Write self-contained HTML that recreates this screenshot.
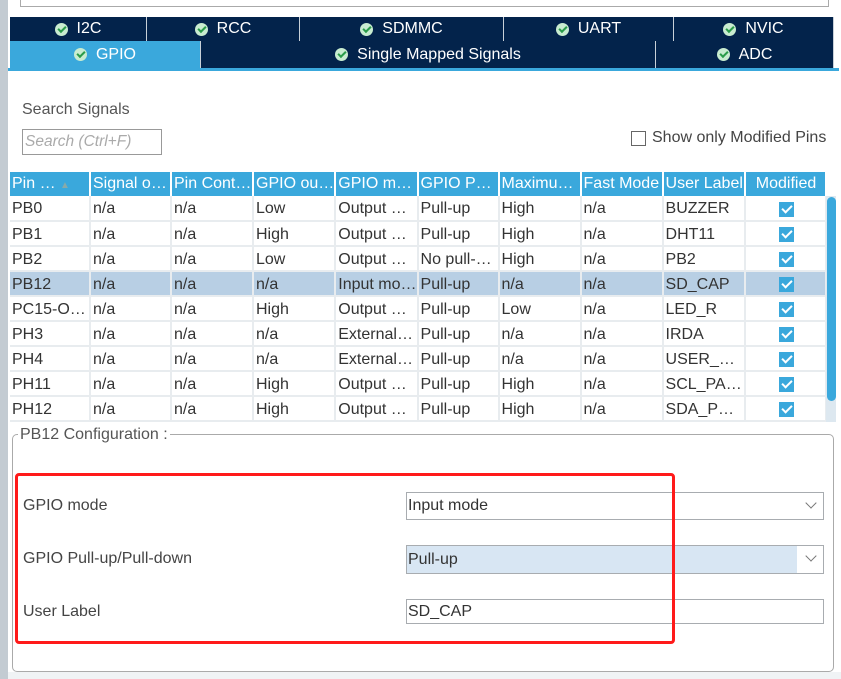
<!DOCTYPE html>
<html><head><style>
*{box-sizing:border-box;margin:0;padding:0}
body{width:841px;height:679px;overflow:hidden;background:#fff;font-family:"Liberation Sans",sans-serif;position:relative;color:#333}
.a{position:absolute}
.tab{position:absolute;background:#03234b;color:#fff;font-size:16px;display:flex;align-items:center;justify-content:center;border-right:1px solid #c8d0d8}
.ck{display:inline-block;width:13px;height:13px;border-radius:50%;background:#c8ecd0;margin-right:9px;position:relative}
.ck:after{content:"";position:absolute;left:3px;top:3px;width:6px;height:3px;border-left:2px solid #2a9c4a;border-bottom:2px solid #2a9c4a;transform:rotate(-45deg)}
table{border-collapse:collapse;position:absolute;left:10px;top:172px;table-layout:fixed;font-size:16px}
th{background:#3aa8dc;color:#fff;font-weight:normal;height:24px;text-align:left;padding-left:2px;border-right:2px solid #fff;white-space:nowrap;overflow:hidden}
td{height:25px;padding-left:2px;padding-top:2px;border-right:2px solid #e8ecef;border-bottom:2px solid #e8ecef;white-space:nowrap;overflow:hidden;color:#333}
tr.sel td{background:#b8cfe4}
.cb{display:block;margin:0 auto;width:15px;height:15px;background:#3aa8dc;position:relative}
.cb:after{content:"";position:absolute;left:3px;top:3px;width:8px;height:4px;border-left:2px solid #fff;border-bottom:2px solid #fff;transform:rotate(-45deg)}
.lbl{position:absolute;left:23px;font-size:16px;color:#444}
.fld{position:absolute;left:406px;width:418px;border:1px solid #a8acb0;font-size:16px;padding-left:1px;display:flex;align-items:center;color:#333}
.chev{position:absolute;right:8px;top:6px;width:8px;height:8px;border-right:1.3px solid #777;border-bottom:1.3px solid #777;transform:rotate(45deg)}
</style></head><body>
<div class="a" style="left:0;top:0;width:8px;height:679px;background:#c3cbd2"></div>
<div class="a" style="left:20px;top:-2px;width:809px;height:9px;border:1px solid #aaa;border-top:none"></div>
<div class="tab" style="left:10px;top:17px;width:137px;height:24px"><span class="ck"></span>I2C</div>
<div class="tab" style="left:147px;top:17px;width:153px;height:24px"><span class="ck"></span>RCC</div>
<div class="tab" style="left:300px;top:17px;width:204px;height:24px"><span class="ck"></span>SDMMC</div>
<div class="tab" style="left:504px;top:17px;width:170px;height:24px"><span class="ck"></span>UART</div>
<div class="tab" style="left:674px;top:17px;width:160px;height:24px"><span class="ck"></span>NVIC</div>
<div class="tab" style="left:10px;top:41px;width:191px;height:27px;background:#3aa8dc"><span class="ck"></span>GPIO</div>
<div class="tab" style="left:201px;top:41px;width:455px;height:27px"><span class="ck"></span>Single Mapped Signals</div>
<div class="tab" style="left:656px;top:41px;width:178px;height:27px"><span class="ck"></span>ADC</div>
<div class="a" style="left:8px;top:68px;width:831px;height:3px;background:#3aa8dc"></div>
<div class="a" style="left:22px;top:101px;font-size:16px;color:#555">Search Signals</div>
<div class="a" style="left:22px;top:129px;width:140px;height:26px;border:1px solid #999;font-size:15.5px;font-style:italic;color:#aaa;padding:3px 2px">Search (Ctrl+F)</div>
<div class="a" style="left:631px;top:131px;width:15px;height:15px;border:1px solid #666"></div>
<div class="a" style="left:652px;top:129px;font-size:16px;color:#444">Show only Modified Pins</div>
<table>
<colgroup><col style="width:80px"><col style="width:81px"><col style="width:82px"><col style="width:82px"><col style="width:82px"><col style="width:81px"><col style="width:82px"><col style="width:82px"><col style="width:82px"><col style="width:81px"></colgroup>
<tr><th>Pin … <span style="color:#8aa;font-size:10px">▲</span></th><th>Signal o…</th><th>Pin Cont…</th><th>GPIO ou…</th><th>GPIO m…</th><th>GPIO P…</th><th>Maximu…</th><th>Fast Mode</th><th>User Label</th><th style="text-align:center">Modified</th></tr>
<tr><td>PB0</td><td>n/a</td><td>n/a</td><td>Low</td><td>Output …</td><td>Pull-up</td><td>High</td><td>n/a</td><td>BUZZER</td><td><span class="cb"></span></td></tr>
<tr><td>PB1</td><td>n/a</td><td>n/a</td><td>High</td><td>Output …</td><td>Pull-up</td><td>High</td><td>n/a</td><td>DHT11</td><td><span class="cb"></span></td></tr>
<tr><td>PB2</td><td>n/a</td><td>n/a</td><td>Low</td><td>Output …</td><td>No pull-…</td><td>High</td><td>n/a</td><td>PB2</td><td><span class="cb"></span></td></tr>
<tr class="sel"><td>PB12</td><td>n/a</td><td>n/a</td><td>n/a</td><td>Input mo…</td><td>Pull-up</td><td>n/a</td><td>n/a</td><td>SD_CAP</td><td><span class="cb"></span></td></tr>
<tr><td>PC15-O…</td><td>n/a</td><td>n/a</td><td>High</td><td>Output …</td><td>Pull-up</td><td>Low</td><td>n/a</td><td>LED_R</td><td><span class="cb"></span></td></tr>
<tr><td>PH3</td><td>n/a</td><td>n/a</td><td>n/a</td><td>External…</td><td>Pull-up</td><td>n/a</td><td>n/a</td><td>IRDA</td><td><span class="cb"></span></td></tr>
<tr><td>PH4</td><td>n/a</td><td>n/a</td><td>n/a</td><td>External…</td><td>Pull-up</td><td>n/a</td><td>n/a</td><td>USER_…</td><td><span class="cb"></span></td></tr>
<tr><td>PH11</td><td>n/a</td><td>n/a</td><td>High</td><td>Output …</td><td>Pull-up</td><td>High</td><td>n/a</td><td>SCL_PA…</td><td><span class="cb"></span></td></tr>
<tr><td>PH12</td><td>n/a</td><td>n/a</td><td>High</td><td>Output …</td><td>Pull-up</td><td>High</td><td>n/a</td><td>SDA_P…</td><td><span class="cb"></span></td></tr>
</table>
<div class="a" style="left:826px;top:196px;width:10px;height:226px;background:#dde8f0"></div>
<div class="a" style="left:827px;top:197px;width:9px;height:204px;background:#3aa8dc;border-radius:5px"></div>
<div class="a" style="left:8px;top:672px;width:833px;height:7px;background:#f0f3f5"></div>
<div class="a" style="left:12px;top:434px;width:822px;height:238px;border:1px solid #aaa;border-radius:5px;background:#fff"></div>
<div class="a" style="left:18px;top:426px;font-size:16px;color:#555;background:#fff;padding:0 2px">PB12 Configuration :</div>
<div class="lbl" style="top:497px">GPIO mode</div>
<div class="lbl" style="top:550px">GPIO Pull-up/Pull-down</div>
<div class="lbl" style="top:603px">User Label</div>
<div class="fld" style="top:492px;height:28px">Input mode<span class="chev"></span></div>
<div class="fld" style="top:545px;height:29px;background:linear-gradient(90deg,#d8e6f3 390px,#fff 390px)">Pull-up<span class="chev"></span></div>
<div class="fld" style="top:599px;height:25px">SD_CAP</div>
<div class="a" style="left:15px;top:473px;width:660px;height:171px;border:3px solid #ff1a1a;border-radius:4px"></div>
</body></html>
